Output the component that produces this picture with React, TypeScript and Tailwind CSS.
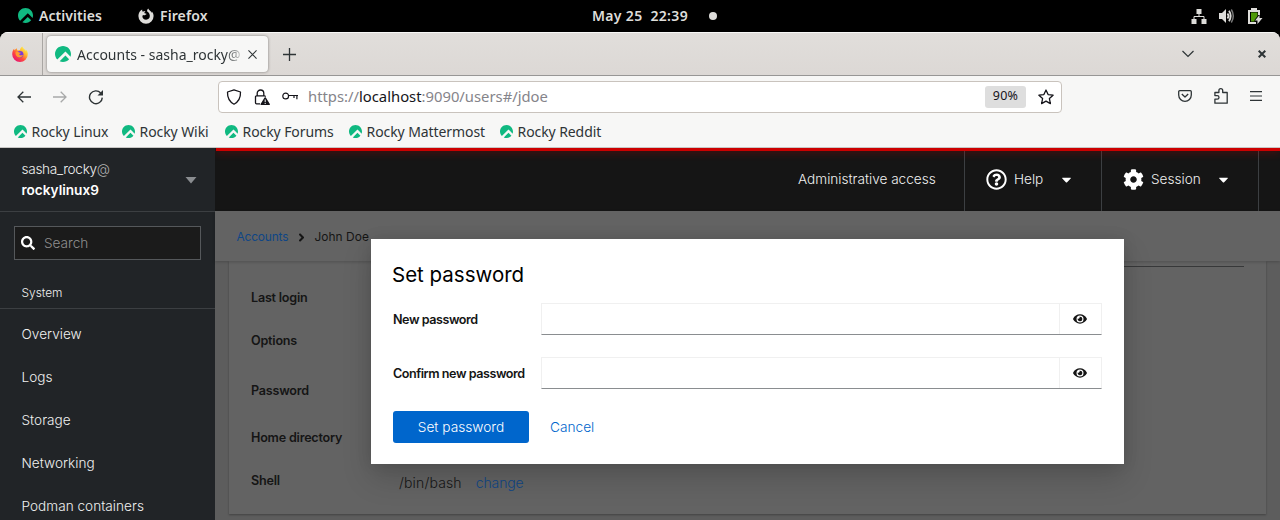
import React from "react";
import { SiRockylinux } from "react-icons/si";
import { FaRegQuestionCircle, FaCog, FaEye, FaSearch, FaAngleRight, FaCaretDown } from "react-icons/fa";

function Bookmark({ label, className }: { label: string; className: string }) {
  return (
    <div className={`flex items-center gap-[5px] ${className}`}>
      <SiRockylinux className="size-[13px] shrink-0 text-[#10b981]" />
      <span className="whitespace-nowrap">{label}</span>
    </div>
  );
}

function FirefoxColor() {
  return (
    <svg viewBox="0 0 16 16" className="size-4">
      <defs>
        <linearGradient id="fx" x1="0.85" y1="0.1" x2="0.2" y2="0.9">
          <stop offset="0" stopColor="#fff44f" />
          <stop offset="0.35" stopColor="#ffb02e" />
          <stop offset="0.65" stopColor="#ff4a3d" />
          <stop offset="1" stopColor="#e8186e" />
        </linearGradient>
      </defs>
      <path fill="url(#fx)" d="M15.600 6.400C15.200 5 14.300 4 13.600 3.600c.4.900.5 1.400.5 1.600C13.200 3.400 11.200 2.600 10.300.4c-1.500 1-2.200 2.500-2.300 3.500-1 .1-1.600.4-2.100.7C5 4.200 4.900 3.200 5 2.300 4 2.700 3.200 3.500 2.600 4.300 2.200 3.900 2.200 2.900 2.200 2.600 1.200 3.500.2 5.700.2 8.200a7.800 7.800 0 0 0 15.600 0c0-.6 0-1.200-.2-1.800z" />
      <circle cx="8" cy="8.300" r="3.400" fill="#7a3bd8" />
      <path fill="#ff9a2e" d="M3.500 6.200C5 5 6.300 5.600 7 6.600c.7.100 1.800 0 1.800.4S7.800 7.800 7.300 8c-.1.500.1 1.300 1.400 1.300 1 0 1.400-.6 2.300-.2-.6 1.700-2.100 2.600-3.800 2.400C4.800 11.200 3.200 8.600 3.500 6.200z" />
    </svg>
  );
}

function FirefoxMono() {
  return (
    <svg viewBox="0 0 16 16" className="size-4" fill="#deddda">
      <path d="M10.200.5c-1 .9-1.300 2-1 3.100.9.400 2.400 1.800 2.600 3.900.3 2.300-1.400 4.200-3.700 4.200-2.200 0-3.600-1.500-3.700-3.200 0-.8.300-1.300.8-1.600.5.600 1.300.5 1.900.1l1.300-.8c.2-.5-.2-.8-.8-.8l-1.100-.2c-.2-.8.200-1.600 1-2.200-1.100-.1-2 .2-2.600.8-.7-.4-.8-1.300-.7-2.200C2 2.700.4 5.200.4 8.100a7.600 7.600 0 0 0 15.200 0c0-1.900-.7-3.600-1.700-4.700l.2 1.500C13.100 2.900 11 2.500 10.200.5z" />
    </svg>
  );
}

function PasswordRow({ label, className }: { label: string; className: string }) {
  return (
    <div className={`flex items-center ${className}`}>
      <label className="w-[148px] whitespace-nowrap pt-[2px] text-[12.600px] font-semibold tracking-[-0.46px] text-[#151515]">{label}</label>
      <div className="flex h-8 flex-1 border border-[#f0f0f0] border-b-[#8a8d90]">
        <div className="flex-1" />
        <div className="flex w-[42px] items-center justify-center border-l border-[#f0f0f0] pr-[2px]">
          <FaEye className="size-[14px] text-[#151515]" />
        </div>
      </div>
    </div>
  );
}

export default function App() {
  return (
    <div className="flex h-[520px] w-[1280px] flex-col overflow-hidden bg-black font-['Inter',sans-serif]">
      <div className="flex h-8 shrink-0 items-center bg-black text-[14px] font-semibold text-[#deddda] font-['Noto_Sans',sans-serif]">
        <div className="-mt-px flex w-[138px] items-center gap-[6px] pl-[18px]">
          <SiRockylinux className="size-[15px] text-[#10b981]" />
          <span className="tracking-[0.05px]">Activities</span>
        </div>
        <div className="-mt-px flex w-[454px] items-center gap-[6px]">
          <FirefoxMono />
          <span className="tracking-[0.1px]">Firefox</span>
        </div>
        <span className="-mt-[2px] whitespace-pre tracking-[0.33px]">May 25  22:39</span>
        <div className="ml-[21px] size-2 rounded-full bg-[#deddda]" />
        <div className="ml-auto flex items-center gap-[12px] pr-[17px]">
          <svg viewBox="0 0 16 16" className="size-4">
            <path fill="#deddda" d="M5.500 1h5v5h-5zM.5 11h5v5h-5zM10.500 11h5v5h-5z" />
            <path fill="none" stroke="#deddda" d="M8 6v2.500M3 11V8.500h10V11" />
          </svg>
          <svg viewBox="0 0 16 16" className="size-4">
            <path fill="#deddda" d="M0 5h3l4-4v14l-4-4H0z" />
            <path fill="none" stroke="#deddda" strokeWidth="1.800" d="M8.500 5.500q2 2.500 0 5M10 2.800q3.400 5.200 0 10.400" />
            <path fill="none" stroke="#777" strokeWidth="1.500" d="M12.300 1.500q4 6.500 0 13" />
          </svg>
          <svg viewBox="0 0 16 16" className="size-4">
            <path fill="#deddda" d="M4 0h6v2h3v5h-2V4H3v10h6v2H1V2H4z" />
            <path fill="#4e9a06" d="M4 4.500h6.500v3.500L7.500 12v1.500H4z" />
            <path fill="#deddda" d="M12.500 7v3H15.500l-5 6v-3.500H8z" />
          </svg>
        </div>
      </div>

      <div className="flex min-h-0 flex-1 flex-col overflow-hidden rounded-t-lg bg-[#f6f5f4] text-[14px] text-[#2e3436] font-['Noto_Sans',sans-serif]">
        <div className="flex h-11 shrink-0 items-center border-t border-b border-t-[#f8f8f7] border-b-[#979695] bg-linear-to-b from-[#e1dedb] to-[#dcd8d5]">
          <div className="flex h-full w-[43px] items-center border-r border-[#a9a6a3] pl-3">
            <FirefoxColor />
          </div>
          <div className="ml-1 flex h-9 w-[221px] items-center rounded-[4px] bg-[#f7f7f6] pl-2 shadow-[0_0_3px_rgba(0,0,0,0.45)]">
            <SiRockylinux className="size-4 shrink-0 text-[#10b981]" />
            <div className="ml-[6px] w-[168px] whitespace-nowrap mask-r-from-88%">Accounts - sasha_rocky@</div>
            <svg viewBox="0 0 10 10" className="ml-[3px] size-[9px]" stroke="#2e3436" strokeWidth="1.200"><path d="M.5.500l9 9M9.500.500l-9 9" /></svg>
          </div>
          <svg viewBox="0 0 12 12" className="ml-[15px] size-[13px]" stroke="#2e3436" strokeWidth="1.200"><path d="M6 0v12M0 6h12" /></svg>
          <svg viewBox="0 0 12 8" className="ml-auto h-2 w-3" fill="none" stroke="#2e3436" strokeWidth="1.200"><path d="M.5 1L6 6.500 11.500 1" /></svg>
          <svg viewBox="0 0 8 8" className="ml-[64px] mr-[14px] size-2" stroke="#2e3436" strokeWidth="2"><path d="M.7.700l6.600 6.600M7.300.700L.7 7.300" /></svg>
        </div>

        <div className="flex h-[41px] shrink-0 items-center bg-[#f7f7f6]">
          <svg viewBox="0 0 14 12" className="ml-[17px] h-3 w-[14px]" fill="none" stroke="#2e3436" strokeWidth="1.300"><path d="M14 6H1M6.300.700L1 6l5.300 5.300" /></svg>
          <svg viewBox="0 0 14 12" className="ml-[22px] h-3 w-[14px]" fill="none" stroke="#a8a9a9" strokeWidth="1.300"><path d="M0 6h13M7.700.700L13 6l-5.300 5.300" /></svg>
          <svg viewBox="0 0 16 16" className="ml-[21px] size-4"><path fill="none" stroke="#2e3436" strokeWidth="1.400" d="M14.300 8.600A6.400 6.400 0 1 1 12.700 4" /><path fill="#2e3436" d="M15 1v5.500H9.500z" /></svg>
          <div className="ml-[114px] flex h-8 w-[844px] items-center rounded-[4px] border border-[#c9c3bd] bg-white pl-[7px]">
            <svg viewBox="0 0 16 16" className="size-4" fill="none" stroke="#15141a" strokeWidth="1.300"><path d="M8 .8L14.500 3c.2 5.500-1.500 9.500-6.500 12.200C3 12.500 1.300 8.500 1.500 3z" strokeLinejoin="round" /></svg>
            <svg viewBox="0 0 16 16" className="ml-[12px] size-4">
              <path fill="none" stroke="#15141a" strokeWidth="1.300" d="M6 14.800H2.500a1 1 0 0 1-1-1v-6a1 1 0 0 1 1-1h8a1 1 0 0 1 1 1M3.200 6.800V4.300a3.300 3.300 0 0 1 6.600 0v2.500" />
              <path fill="#15141a" stroke="#15141a" strokeWidth="1.500" d="M11.200 9l4 6.300H7.200z" strokeLinejoin="round" />
              <path stroke="#fff" d="M11.200 10.500v2.700M11.200 14v1" />
            </svg>
            <svg viewBox="0 0 16 10" className="-mt-px ml-[12px] h-[10px] w-4" fill="none" stroke="#15141a" strokeWidth="1.200"><circle cx="3.700" cy="5" r="2.900" /><path d="M6.600 4.500H16M14.900 4.500v3.700M12 4.500v2.500" /></svg>
            <span className="-mt-px ml-[10px] text-[14.800px] text-[#85848a]">https://<span className="text-[#15141a]">localhost</span>:9090/users#/jdoe</span>
            <span className="ml-auto flex h-[22px] w-[41px] items-center justify-center rounded-[3px] bg-[#dedede] text-[12.500px] tracking-[0.2px] text-[#15141a]">90%</span>
            <svg viewBox="0 0 16 16" className="ml-3 mr-[7px] size-4" fill="none" stroke="#15141a" strokeWidth="1.300" strokeLinejoin="round"><path d="M8 1l2.100 4.600 5 .6-3.700 3.400 1 5L8 12.100l-4.400 2.500 1-5L.9 6.200l5-.6z" /></svg>
          </div>
          <svg viewBox="0 0 14 12" className="-mt-px ml-auto mr-[22px] h-3 w-[14px]" fill="none" stroke="#2e3436" strokeWidth="1.300" strokeLinejoin="round"><path d="M1.700.700h10.600a1 1 0 0 1 1 1V5a6.300 6.300 0 0 1-12.600 0V1.700a1 1 0 0 1 1-1z" /><path d="M3.800 4L7 7l3.200-3" /></svg>
          <svg viewBox="0 0 14 16" className="-mt-px mr-[22px] h-4 w-[14px]" fill="none" stroke="#2e3436" strokeWidth="1.300" strokeLinejoin="round"><path d="M.9 15.200v-4h2.300a1.800 1.800 0 0 0 0-3.600H.9V4.500h4V2.600a1.900 1.900 0 0 1 3.800 0v1.900h4.500v10.700z" /></svg>
          <svg viewBox="0 0 12 10" className="-mt-[2px] mr-[18px] h-[10px] w-3" stroke="#2e3436" strokeWidth="1.200"><path d="M0 .6h12M0 5h12M0 9.400h12" /></svg>
        </div>

        <div className="flex h-[31px] shrink-0 items-center border-b border-[#c8c6c4] bg-[#f7f7f6] pb-[2px] pl-[13.500px] tracking-[-0.08px]">
          <Bookmark label="Rocky Linux" className="w-[108px]" />
          <Bookmark label="Rocky Wiki" className="w-[103px]" />
          <Bookmark label="Rocky Forums" className="w-[124px]" />
          <Bookmark label="Rocky Mattermost" className="w-[151px]" />
          <Bookmark label="Rocky Reddit" className="w-[110px]" />
        </div>

        <div className="flex min-h-0 flex-1 font-['Inter',sans-serif]">
          <aside className="flex w-[215px] shrink-0 flex-col bg-[#212427] text-[13.600px] font-light text-[#f0f0f0]">
            <div className="flex h-16 shrink-0 items-center justify-between border-b border-[#3c3f42] pl-[21.500px] pr-[18px] leading-[21px]">
              <div>
                <div className="tracking-[-0.3px]">sasha_rocky<span className="text-[#b0b0b0]">@</span></div>
                <div className="font-semibold text-white">rockylinux9</div>
              </div>
              <svg viewBox="0 0 12 7" className="mt-px h-[7px] w-3" fill="#8a8d90"><path d="M.5 0h11L6 6.500z" /></svg>
            </div>
            <div className="mx-[14px] mt-[14px] flex h-[34px] shrink-0 items-center gap-[9px] border border-[#55585b] bg-[#1b1b1b] pl-[6px]">
              <FaSearch className="size-[14px] text-white" />
              <span className="text-[#8f8f8f]">Search</span>
            </div>
            <div className="mt-4 flex h-[33px] shrink-0 items-center border-b border-[#3c3f42] pl-[21.500px] pt-px text-[11.900px]">System</div>
            <nav className="mt-1 flex flex-col">
              {["Overview", "Logs", "Storage", "Networking", "Podman containers"].map((item) => (
                <a key={item} className="flex h-[43px] shrink-0 items-center pl-[21.500px] tracking-[0.02px]">{item}</a>
              ))}
            </nav>
          </aside>

          <main className="relative flex min-w-0 flex-1 flex-col bg-[#5d5d5d]">
            <header className="flex h-[63px] shrink-0 justify-end bg-[#151515] text-[13.600px] font-light text-[#f0f0f0]">
              <div className="flex w-[166px] items-center">Administrative access</div>
              <div className="flex w-[137px] items-center border-l border-[#3c3f42] pl-[21px]">
                <FaRegQuestionCircle className="size-[21px] text-white" />
                <span className="ml-[7px]">Help</span>
                <FaCaretDown className="ml-auto mr-[27px] size-[15px] text-white" />
              </div>
              <div className="flex w-[157px] items-center border-l border-[#3c3f42] pl-[21px]">
                <FaCog className="size-[21px] text-white" />
                <span className="ml-[7px]">Session</span>
                <FaCaretDown className="ml-auto mr-[27px] size-[15px] text-white" />
              </div>
              <div className="w-[22px] border-l border-[#3c3f42]" />
            </header>
            <div className="z-[1] flex h-[50px] shrink-0 items-center bg-[#636363] pt-[2px] pl-[21.500px] text-[11.900px] text-[#151515] shadow-[0_1px_3px_rgba(0,0,0,0.2)]">
              <span className="w-[52px] tracking-[-0.15px] text-[#0f4686]">Accounts</span>
              <FaAngleRight className="ml-[6px] size-[13px]" />
              <span className="ml-[7px] tracking-[0.05px]">John Doe</span>
            </div>
            <div className="mr-[14px] ml-[14px] flex h-[253px] shrink-0 flex-col bg-[#636363] px-[22px] shadow-[0_1px_2px_rgba(0,0,0,0.3)]">
              <div className="ml-[148px] h-[6px] shrink-0 border-b border-[#373839]" />
              <div className="grid grid-cols-[148px_1fr] grid-rows-[60px_26px_74px_20px_66px] items-center pt-px text-[12.600px] font-semibold tracking-[-0.22px] text-[#151515]">
                <span>Last login</span><span />
                <span>Options</span><span />
                <span>Password</span><span />
                <span>Home directory</span><span />
                <span>Shell</span>
                <span className="pt-[3px] text-[14px] font-light tracking-[0.15px]">/bin/bash<span className="ml-[14px] tracking-[-0.12px] text-[#0f4686]">change</span></span>
              </div>
            </div>
            <div className="absolute inset-x-0 top-0 h-[13px] overflow-hidden">
              <div className="ml-[1px] h-[3px] bg-[#cc0000] shadow-[0_0_10px_rgba(204,0,0,0.7)]" />
            </div>
            <div className="absolute top-[91px] left-[156px] z-10 h-[225px] w-[753px] bg-white px-[22px] shadow-[0_14px_28px_rgba(3,3,3,0.16),0_0_14px_rgba(3,3,3,0.1)]">
              <h1 className="-ml-px pt-[22px] text-[20.500px] leading-[28px] text-black">Set password</h1>
              <PasswordRow label="New password" className="mt-[14px]" />
              <PasswordRow label="Confirm new password" className="mt-[22px]" />
              <div className="mt-[22px] flex items-center text-[13.700px] font-light">
                <button className="h-8 w-[136px] rounded-[3px] bg-[#0066cc] text-white">Set password</button>
                <button className="ml-[21px] text-[#0066cc]">Cancel</button>
              </div>
            </div>
          </main>
        </div>
      </div>
    </div>
  );
}
